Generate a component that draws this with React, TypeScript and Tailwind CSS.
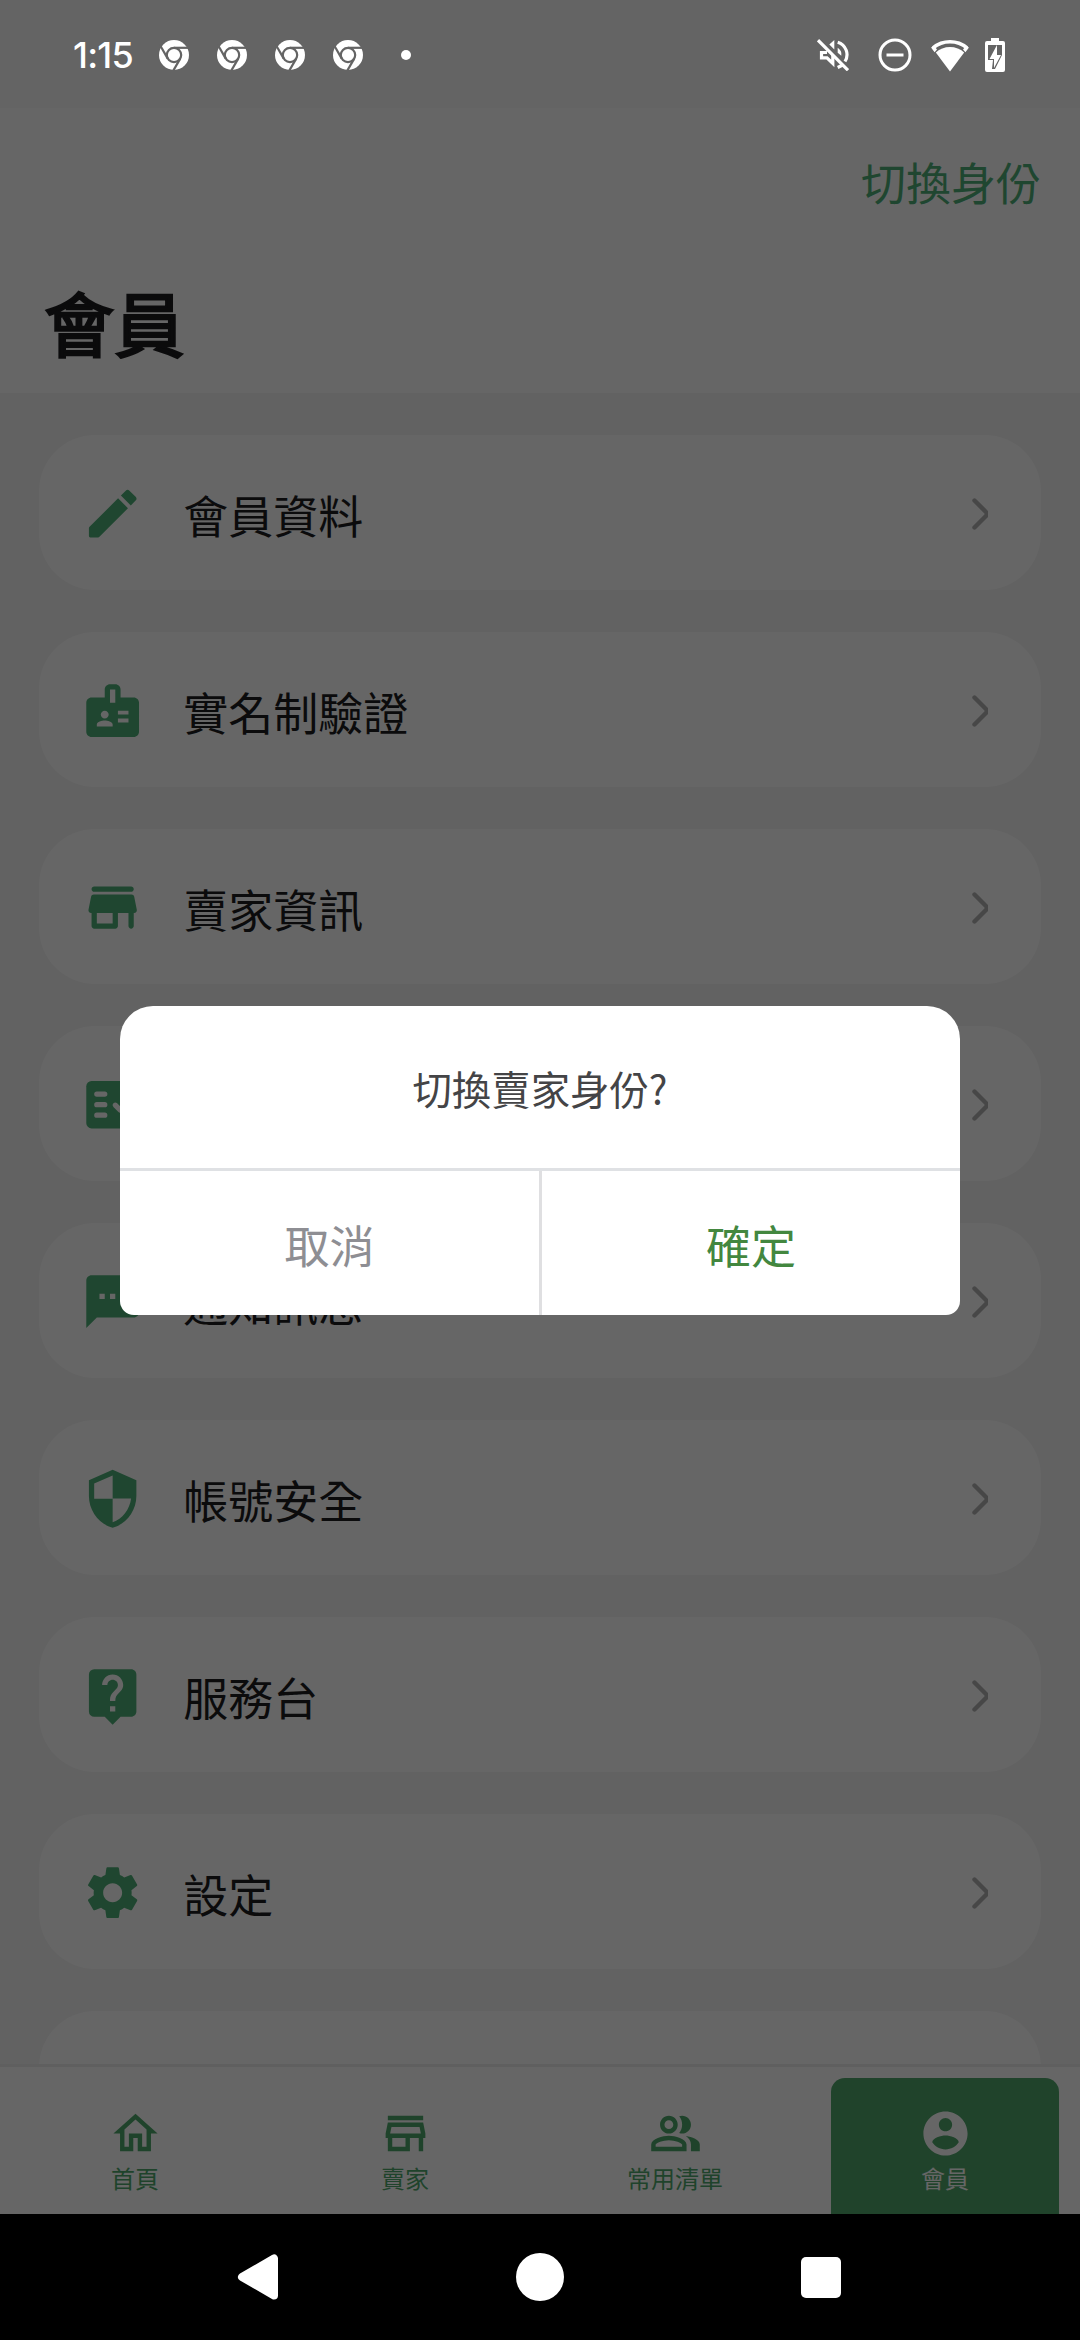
import type { ReactNode } from 'react';
import { MdBadge, MdSecurity, MdLiveHelp, MdSettings, MdSms } from 'react-icons/md';

const PencilIcon = () => (
  <svg viewBox="0 0 24 24" fill="currentColor" className="size-full">
    <path d="M3 17.46v3.04c0 .28.22.5.5.5h3.04c.13 0 .26-.05.35-.15L17.81 9.94l-3.75-3.75L3.15 17.1c-.1.1-.15.22-.15.36zM20.71 7.04a.996.996 0 0 0 0-1.41l-2.34-2.34a.996.996 0 0 0-1.41 0l-1.83 1.83 3.75 3.75 1.83-1.83z" />
  </svg>
);

const StoreIcon = () => (
  <svg viewBox="0 0 24 24" fill="currentColor" className="size-full">
    <path d="M5 6h14c.55 0 1-.45 1-1s-.45-1-1-1H5c-.55 0-1 .45-1 1s.45 1 1 1zm15.16 1.8c-.09-.46-.5-.8-.98-.8H4.82c-.48 0-.89.34-.98.8l-1 5c-.12.62.35 1.2.98 1.2H4v5c0 .55.45 1 1 1h8c.55 0 1-.45 1-1v-5h4v5c0 .55.45 1 1 1s1-.45 1-1v-5h.18c.63 0 1.1-.58.98-1.2l-1-5zM12 18H6v-4h6v4z" />
  </svg>
);

const FactCheckIcon = () => (
  <svg viewBox="0 0 24 24" fill="none" className="size-full">
    <rect x="2" y="3" width="20" height="18" rx="2" fill="currentColor" />
    <path d="M6 8h3M6 12h3M6 16h3M13 12.2l1.8 1.8 4-4" stroke="#fff" strokeWidth="2" strokeLinecap="round" strokeLinejoin="round" />
  </svg>
);

const menuItems: { label: string; icon: ReactNode }[] = [
  { label: '會員資料', icon: <PencilIcon /> },
  { label: '實名制驗證', icon: <MdBadge className="size-full" /> },
  { label: '賣家資訊', icon: <StoreIcon /> },
  { label: '訂單查詢', icon: <FactCheckIcon /> },
  { label: '通知訊息', icon: <MdSms className="size-full" /> },
  { label: '帳號安全', icon: <MdSecurity className="size-full" /> },
  { label: '服務台', icon: <MdLiveHelp className="size-full" /> },
  { label: '設定', icon: <MdSettings className="size-full" /> },
];

const tabs = [
  {
    label: '首頁',
    path: 'M12 5.69l5 4.5V18h-2v-6H9v6H7v-7.81l5-4.5M12 3L2 12h3v8h6v-6h2v6h6v-8h3L12 3z',
  },
  {
    label: '賣家',
    path: 'M18.36 9l.6 3H5.04l.6-3h12.72M20 4H4v2h16V4zm0 3H4l-1 5v2h1v6h10v-6h4v6h2v-6h1v-2l-1-5zM6 18v-4h6v4H6z',
  },
  {
    label: '常用清單',
    path: 'M16.67 13.13C18.04 14.06 19 15.32 19 17v3h4v-3c0-2.18-3.57-3.47-6.33-3.87zM15 12c2.21 0 4-1.79 4-4s-1.79-4-4-4c-.47 0-.91.1-1.33.24C14.5 5.27 15 6.58 15 8s-.5 2.73-1.33 3.76c.42.14.86.24 1.33.24zM9 12c2.21 0 4-1.79 4-4s-1.79-4-4-4-4 1.79-4 4 1.79 4 4 4zm0-6c1.1 0 2 .9 2 2s-.9 2-2 2-2-.9-2-2 .9-2 2-2zM9 13c-2.67 0-8 1.34-8 4v3h16v-3c0-2.66-5.33-4-8-4zm6 5H3v-.99C3.2 16.29 6.3 15 9 15s5.8 1.29 6 2v1z',
  },
  {
    label: '會員',
    path: 'M12 2C6.48 2 2 6.48 2 12s4.48 10 10 10 10-4.48 10-10S17.52 2 12 2zm0 3c1.66 0 3 1.34 3 3s-1.34 3-3 3-3-1.34-3-3 1.34-3 3-3zm0 14.2c-2.5 0-4.71-1.28-6-3.22.03-1.99 4-3.08 6-3.08 1.99 0 5.97 1.09 6 3.08-1.29 1.94-3.5 3.22-6 3.22z',
    active: true,
  },
];

const ChromeIcon = () => (
  <svg viewBox="-15 -15 30 30" className="size-[30px]">
    <circle r="15" fill="#fff" />
    <g fill="none" stroke="#646464" strokeWidth="2.2">
      <circle r="7.2" />
      <path d="M0-7.2H16" />
      <path d="M0-7.2H16" transform="rotate(120)" />
      <path d="M0-7.2H16" transform="rotate(240)" />
    </g>
  </svg>
);

const StatusIcons = () => (
  <div className="flex items-center text-white">
    {/* muted speaker */}
    <svg viewBox="0 0 32 32" fill="none" stroke="currentColor" strokeWidth="3.2" className="mr-[29px] size-8">
      <path d="M10 13.500H4.500v5.300H10l5.800 5.700V16" />
      <path d="M12.300 5.500L17.300 1v9.500z" fill="currentColor" stroke="none" />
      <path d="M20.700 3.200A13 13 0 0 1 28 22.500M20.700 28.500l5-2.500" />
      <path d="M20.700 8.700q4.500 3 3.600 8l-3.600-3z" fill="currentColor" stroke="none" />
      <path d="M1 1.200L31 31.200" />
    </svg>
    {/* do not disturb */}
    <svg viewBox="0 0 34 34" fill="none" stroke="currentColor" strokeWidth="3" className="mr-[18px] size-[34px]">
      <circle cx="17" cy="17" r="15" />
      <path d="M8.500 17h17" />
    </svg>
    {/* wifi */}
    <svg viewBox="0 0 40 34" className="mr-[15px] h-[34px] w-10">
      <path d="M20 33.500L5.800 14.500a21 21 0 0 1 28.400 0z" fill="currentColor" />
      <path d="M3 9.800a27 27 0 0 1 34 0" fill="none" stroke="currentColor" strokeWidth="3.500" />
      <path d="M1 9.500l3.200-1.500L7 11.500l-2.400 2.800zM39 9.500l-3.200-1.500L33 11.500l2.400 2.800z" fill="currentColor" />
    </svg>
    {/* battery, charging */}
    <svg viewBox="0 0 20 34" className="h-[34px] w-5">
      <path d="M6 0h8v3h4a2 2 0 0 1 2 2v27a2 2 0 0 1-2 2H2a2 2 0 0 1-2-2V5a2 2 0 0 1 2-2h4z" fill="currentColor" />
      <path d="M3 7h14v10L10 31H7l1-9H3z" fill="#646464" />
      <path d="M12 7L4.500 21H9v9l7-13h-4z" fill="currentColor" />
    </svg>
  </div>
);

const Chevron = () => (
  <svg viewBox="0 0 16 34" fill="none" className="h-[34px] w-4">
    <path d="M2.500 3.500l11.200 11.200q2.300 2.300 0 4.600L2.500 30.500" stroke="#b2b2b2" strokeWidth="4.400" strokeLinecap="round" />
  </svg>
);

const App = () => {
  return (
    <div className="relative flex h-[2340px] w-[1080px] flex-col overflow-hidden bg-black font-['Noto_Sans_CJK_TC',sans-serif] leading-none">
      {/* Page under the dialog */}
      <div className="flex h-[2214px] flex-col bg-[#f5f5f5]">
        <div className="h-[108px] shrink-0 bg-[#fafafa]" />

        <header className="flex h-[285px] shrink-0 flex-col bg-white pt-[51px]">
          <button className="mr-[39px] self-end text-[45px] leading-[45px] text-[#4fb078]">切換身份</button>
          <h1 className="mt-[82px] pl-11 text-[70.300px] leading-[70px] font-normal text-[#1c1c1e] [-webkit-text-stroke:2.400px_#1c1c1e]">會員</h1>
        </header>

        <main className="flex min-h-0 flex-1 flex-col gap-[42px] overflow-hidden px-[39px] pt-[42px]">
          {menuItems.map((item) => (
            <div key={item.label} className="flex h-[155px] shrink-0 items-center rounded-[56px] bg-white pt-0.5 pr-[53px] pl-[42px]">
              <span className="size-[63.300px] text-[#4fb078]">{item.icon}</span>
              <span className="ml-[39px] flex-1 pt-0.5 text-[45px] text-[#1c1c1e]">{item.label}</span>
              <Chevron />
            </div>
          ))}
          <div className="h-[155px] shrink-0 rounded-[56px] bg-white" />
        </main>

        <nav className="grid h-[150px] shrink-0 grid-cols-4 border-t-[3px] border-[#eeeeee] bg-white">
          {tabs.map((tab) => (
            <div
              key={tab.label}
              className={
                tab.active
                  ? 'mx-[21px] mt-[11px] flex flex-col items-center rounded-t-[14px] bg-[#50a76c] pt-[29px] text-white'
                  : 'flex flex-col items-center pt-10 text-[#4fa96c]'
              }
            >
              <svg viewBox="0 0 24 24" fill="currentColor" className="size-[53px]">
                <path d={tab.path} />
              </svg>
              <span className="mt-1.5 text-2xl leading-6">{tab.label}</span>
            </div>
          ))}
        </nav>
      </div>

      {/* Android navigation keys */}
      <div className="flex h-[126px] items-center text-white">
        <svg viewBox="0 0 42 46" className="ml-[237px] h-[46px] w-[42px]">
          <path d="M5 23L37 4.500v37z" fill="currentColor" stroke="currentColor" strokeWidth="8" strokeLinejoin="round" />
        </svg>
        <div className="ml-[237px] size-12 rounded-full bg-white" />
        <div className="ml-[237px] h-[41px] w-10 rounded-[5px] bg-white" />
      </div>

      {/* Dialog and scrim */}
      <div className="absolute inset-x-0 top-0 flex h-[2214px] flex-col items-center bg-black/60">
        <div className="flex h-[110px] w-full shrink-0 items-center justify-between pr-[75px] pl-[73px]">
          <div className="flex items-center">
            <span className="w-[58px] font-['Inter'] text-[36px] font-medium tracking-[-0.8px] whitespace-nowrap text-white">1:15</span>
            <div className="ml-7 flex gap-7">
              <ChromeIcon />
              <ChromeIcon />
              <ChromeIcon />
              <ChromeIcon />
            </div>
            <span className="ml-[38px] size-2.5 rounded-full bg-white" />
          </div>
          <StatusIcons />
        </div>

        <div className="mt-[896px] flex h-[309px] w-[840px] flex-col overflow-hidden rounded-t-[33px] rounded-b-[14px] bg-white">
          <p className="flex h-[162px] items-center justify-center pt-0.5 text-[39.400px] text-[#444446]">切換賣家身份?</p>
          <div className="flex flex-1 border-t-[3px] border-[#dfe1e4]">
            <button className="w-[419px] pt-0.5 text-[45px] text-[#8e8e93]">取消</button>
            <div className="w-[3px] bg-[#dfdfe1]" />
            <button className="flex-1 pt-0.5 text-[45px] text-[#43873f]">確定</button>
          </div>
        </div>
      </div>
    </div>
  );
};

export default App;
